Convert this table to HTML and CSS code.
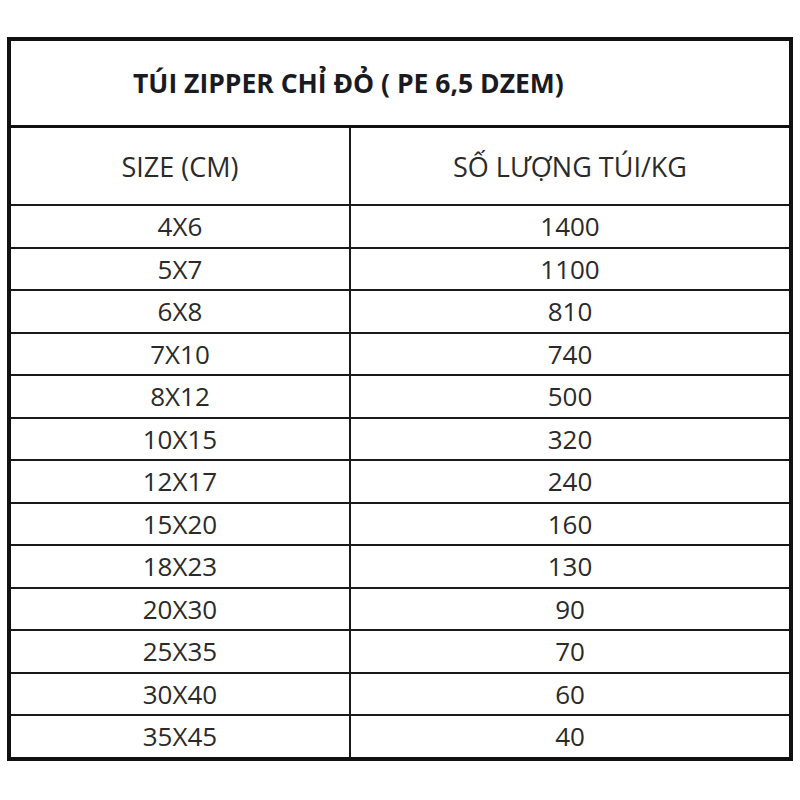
FILE: index.html
```html
<!DOCTYPE html>
<html lang="vi">
<head>
<meta charset="utf-8">
<link rel="stylesheet" href="styles.css">
</head>
<body>
<div class="sheet">
  <div class="title">TÚI ZIPPER CHỈ ĐỎ ( PE 6,5 DZEM)</div>
  <div class="row head"><div class="c1">SIZE (CM)</div><div class="c2">SỐ LƯỢNG TÚI/KG</div></div>
  <div class="row"><div class="c1">4X6</div><div class="c2">1400</div></div>
  <div class="row"><div class="c1">5X7</div><div class="c2">1100</div></div>
  <div class="row"><div class="c1">6X8</div><div class="c2">810</div></div>
  <div class="row"><div class="c1">7X10</div><div class="c2">740</div></div>
  <div class="row"><div class="c1">8X12</div><div class="c2">500</div></div>
  <div class="row"><div class="c1">10X15</div><div class="c2">320</div></div>
  <div class="row"><div class="c1">12X17</div><div class="c2">240</div></div>
  <div class="row"><div class="c1">15X20</div><div class="c2">160</div></div>
  <div class="row"><div class="c1">18X23</div><div class="c2">130</div></div>
  <div class="row"><div class="c1">20X30</div><div class="c2">90</div></div>
  <div class="row"><div class="c1">25X35</div><div class="c2">70</div></div>
  <div class="row"><div class="c1">30X40</div><div class="c2">60</div></div>
  <div class="row last"><div class="c1">35X45</div><div class="c2">40</div></div>
</div>
</body>
</html>
```
FILE: styles.css
```css
html, body {
  margin: 0;
  padding: 0;
  background: #ffffff;
}
body {
  padding: 37px 0 0 7px;
  font-family: "Open Sans", "Liberation Sans", sans-serif;
  color: #2a2a2a;
}
.sheet {
  width: 786px;
  box-sizing: border-box;
  border: 4px solid #111;
  display: flex;
  flex-direction: column;
}
.title {
  height: 84px;
  border-bottom: 3px solid #111;
  display: flex;
  align-items: center;
  padding-left: 122px;
  font-weight: 700;
  font-size: 26.5px;
  color: #1a1a22;
}
.row {
  display: grid;
  grid-template-columns: 338px 2px 1fr;
  height: 40.5px;
  border-bottom: 2px solid #1a1a1a;
}
.row::before {
  content: "";
  grid-column: 2;
  grid-row: 1;
  background: #1a1a1a;
}
.row.head {
  height: 76px;
}
.row.last {
  border-bottom: none;
}
.c1, .c2 {
  display: flex;
  align-items: center;
  justify-content: center;
  font-size: 26px;
  grid-row: 1;
}
.c1 { grid-column: 1; }
.c2 { grid-column: 3; }
.head .c1, .head .c2 {
  font-size: 27px;
}
```
